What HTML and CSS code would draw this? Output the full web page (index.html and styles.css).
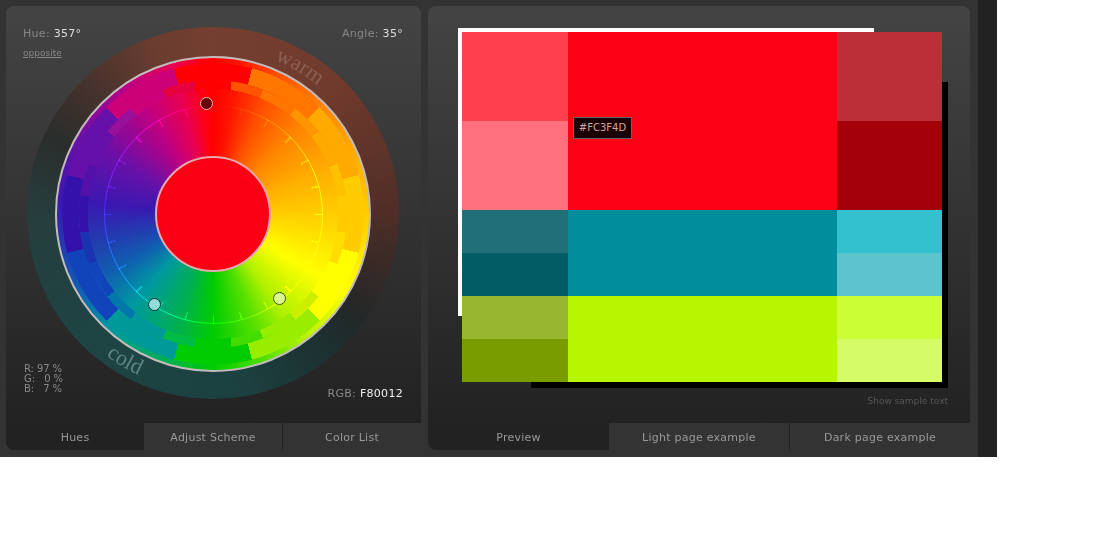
FILE: index.html
```html
<!DOCTYPE html>
<html lang="en">
<head>
  <meta charset="UTF-8">
  <title>Color Scheme</title>
  <link rel="stylesheet" href="styles.css">
</head>
<body>
  <div class="app">
    <div class="frame">

      <section class="panel panel-left">
        <div class="panel-body hues">
          <div class="outer-ring">
            <div class="wheel">
              <div class="tier tier-a"></div>
              <div class="tier tier-b"></div>
              <div class="guide"></div>
              <div class="ticks"></div>
              <div class="center"></div>
            </div>
            <span class="dot dot-red"></span>
            <span class="dot dot-teal"></span>
            <span class="dot dot-lime"></span>
          </div>

          <svg class="ring-words" width="373" height="373" viewBox="0 0 373 373">
            <path id="warm-arc" fill="none" d="M187.9 21.5 A165 165 0 0 1 330.2 105.3"/>
            <path id="cold-arc" fill="none" d="M30.8 272.8 A178 178 0 0 0 183.4 364.5"/>
            <text class="word-warm" text-anchor="middle"><textPath href="#warm-arc" startOffset="50%">warm</textPath></text>
            <text class="word-cold" text-anchor="middle"><textPath href="#cold-arc" startOffset="50%">cold</textPath></text>
          </svg>

          <div class="readouts">
            <div class="readout-row">
              <div>
                <div class="label">Hue: <b>357°</b></div>
                <a class="opposite" href="#">opposite</a>
              </div>
              <div class="label">Angle: <b>35°</b></div>
            </div>
            <div class="readout-row row-bottom">
              <pre class="percent">R: 97 %
G:   0 %
B:   7 %</pre>
              <div class="label">RGB: <b class="hex">F80012</b></div>
            </div>
          </div>
        </div>
        <nav class="tabs">
          <a class="tab active tab-hues">Hues</a>
          <a class="tab tab-adjust">Adjust Scheme</a>
          <a class="tab tab-list">Color List</a>
        </nav>
      </section>

      <section class="panel panel-right">
        <div class="panel-body stage">
          <div class="back back-white"></div>
          <div class="back back-black"></div>
          <div class="swatches">
            <div class="group group-red">
              <div class="side"><i class="c1"></i><i class="c2"></i></div>
              <div class="main"></div>
              <div class="side"><i class="c3"></i><i class="c4"></i></div>
            </div>
            <div class="group group-teal">
              <div class="side"><i class="c1"></i><i class="c2"></i></div>
              <div class="main"></div>
              <div class="side"><i class="c3"></i><i class="c4"></i></div>
            </div>
            <div class="group group-lime">
              <div class="side"><i class="c1"></i><i class="c2"></i></div>
              <div class="main"></div>
              <div class="side"><i class="c3"></i><i class="c4"></i></div>
            </div>
            <div class="tooltip">#FC3F4D</div>
          </div>
          <a class="sample-link" href="#">Show sample text</a>
        </div>
        <nav class="tabs">
          <a class="tab active tab-preview">Preview</a>
          <a class="tab tab-light">Light page example</a>
          <a class="tab tab-dark">Dark page example</a>
        </nav>
      </section>

    </div>
  </div>
</body>
</html>
```

FILE: styles.css
```css
html, body {
  margin: 0;
  background: #fff;
}
body {
  font-family: "DejaVu Sans", sans-serif;
  font-size: 11px;
}
.app {
  width: 997px;
  height: 457px;
  background: #222;
}
.frame {
  width: 978px;
  height: 457px;
  box-sizing: border-box;
  padding: 6px;
  background: #333;
  display: flex;
  gap: 7px;
}
.panel {
  display: flex;
  flex-direction: column;
  height: 444px;
}
.panel-left { width: 415px; }
.panel-right { width: 542px; }
.panel-body {
  height: 417px;
  background: linear-gradient(#444, #222);
  border-radius: 8px 8px 0 0;
  display: grid;
}
.panel-body > * {
  grid-area: 1 / 1;
}

/* tabs */
.tabs {
  display: flex;
  height: 27px;
}
.tab {
  box-sizing: border-box;
  color: #999;
  letter-spacing: 0.25px;
  line-height: 29px;
  text-align: center;
  background: #333;
}
.tab.active {
  background: #222;
  border-radius: 0 0 0 8px;
}
.tab-hues { width: 138px; }
.tab-adjust { width: 139px; border-right: 1px solid #222; }
.tab-list { width: 138px; }
.tab-preview { width: 181px; }
.tab-light { width: 181px; border-right: 1px solid #222; }
.tab-dark { width: 180px; }

/* wheel */
.outer-ring {
  position: relative;
  margin: 21px 0 0 21px;
  justify-self: start;
  align-self: start;
  width: 372px;
  height: 372px;
  border-radius: 50%;
  display: grid;
  place-items: center;
  background: conic-gradient(#743f30 0deg, #703a2c 45deg, #4f2e27 90deg, #3c2a26 105deg, #232828 125deg, #1d3030 140deg, #1c4040 170deg, #1e4444 225deg, #263d3d 270deg, #2a2e2c 295deg, #3e302c 310deg, #6a3c30 340deg, #743f30 360deg);
}
.wheel {
  margin-top: 2px;
  width: 316px;
  height: 316px;
  box-sizing: border-box;
  border: 2px solid #c4bcbc;
  border-radius: 50%;
  display: grid;
  place-items: center;
  background: conic-gradient(#ff0000 0deg, #ff1500 10deg, #ff5000 25deg, #ff8500 45deg, #ffb000 70deg, #ffd500 95deg, #ffff00 120deg, #b0f000 145deg, #55e000 160deg, #00cc00 180deg, #00b050 197deg, #0098a0 222deg, #1060b0 240deg, #2040b0 255deg, #3a18b0 275deg, #6a10a8 300deg, #c00080 328deg, #e80050 345deg, #ff0010 356deg, #ff0000 360deg);
}
.wheel > * {
  grid-area: 1 / 1;
  border-radius: 50%;
}
.tier-a {
  width: 302px;
  height: 302px;
  background: conic-gradient(from -15deg,
    #ff0000 0 30deg, #ff7700 0 60deg, #ffaa00 0 90deg, #ffcc00 0 120deg,
    #ffff00 0 150deg, #99ee00 0 180deg, #00cc00 0 210deg, #009999 0 240deg,
    #1144bb 0 270deg, #3311aa 0 300deg, #6610aa 0 330deg, #cc0077 0 360deg);
  -webkit-mask: radial-gradient(closest-side, transparent 88.7%, #000 88.9%);
  mask: radial-gradient(closest-side, transparent 88.7%, #000 88.9%);
}
.tier-b {
  width: 268px;
  height: 268px;
  background: conic-gradient(from -22deg,
    #e60040 0 14deg, #ff0000 0 30deg,
    #ff5500 0 44deg, #ff7700 0 60deg,
    #ff9500 0 74deg, #ffaa00 0 90deg,
    #ffc000 0 104deg, #ffcc00 0 120deg,
    #ffdd00 0 134deg, #ffff00 0 150deg,
    #ccee00 0 164deg, #99ee00 0 180deg,
    #44dd00 0 194deg, #00cc00 0 210deg,
    #00bb44 0 224deg, #009999 0 240deg,
    #0077aa 0 254deg, #1144bb 0 270deg,
    #1a33b0 0 284deg, #3311aa 0 300deg,
    #5510aa 0 314deg, #6610aa 0 330deg,
    #99109a 0 344deg, #cc0077 0 360deg);
  -webkit-mask: radial-gradient(closest-side, transparent 93.3%, #000 93.6%);
  mask: radial-gradient(closest-side, transparent 93.3%, #000 93.6%);
}
.guide {
  width: 219px;
  height: 219px;
  box-sizing: border-box;
  border: 1px solid #555;
  mix-blend-mode: color-dodge;
}
.ticks {
  width: 219px;
  height: 219px;
  background: repeating-conic-gradient(#3a3a3a 0 0.4deg, transparent 0 14.6deg, #3a3a3a 0 15deg);
  -webkit-mask: radial-gradient(closest-side, transparent 92%, #000 92.5%);
  mask: radial-gradient(closest-side, transparent 92%, #000 92.5%);
  mix-blend-mode: color-dodge;
}
.center {
  width: 116px;
  height: 116px;
  box-sizing: border-box;
  border: 2px solid #e8a8ae;
  background: #fb0013;
}

/* scheme handles on the wheel */
.dot {
  position: absolute;
  width: 13px;
  height: 13px;
  box-sizing: border-box;
  border-radius: 50%;
  border: 1px solid;
}
.dot-red { left: 173px; top: 70px; background: #6b0008; border-color: #e6b8b8; }
.dot-teal { left: 121px; top: 271px; background: #92dcdc; border-color: #0c3236; }
.dot-lime { left: 246px; top: 265px; background: #dcf98c; border-color: #46521c; }

.ring-words {
  position: relative;
  justify-self: center;
  margin-top: 21px;
}
.ring-words text {
  font-family: "Liberation Serif", serif;
  font-size: 22px;
}
.word-warm { fill: #8a5f55; }
.word-cold { fill: #5f8585; }

/* numbers round the wheel */
.readouts {
  position: relative;
  box-sizing: border-box;
  padding: 21px 18px 22px 17px;
  display: flex;
  flex-direction: column;
  justify-content: space-between;
}
.readout-row {
  display: flex;
  justify-content: space-between;
}
.row-bottom { align-items: flex-end; }
.label {
  color: #888;
  letter-spacing: 0.3px;
  line-height: 14px;
}
.label b {
  color: #ddd;
  font-weight: normal;
}
.label b.hex { color: #eee; }
.opposite {
  display: block;
  margin-top: 7px;
  color: #888;
  font-size: 9px;
}
.percent {
  margin: 0 0 7px 1px;
  color: #888;
  font: 10px/10px "DejaVu Sans", sans-serif;
  letter-spacing: -0.1px;
}

/* preview */
.back {
  justify-self: start;
  align-self: start;
}
.back-white {
  margin: 22px 0 0 30px;
  width: 416px;
  height: 288px;
  background: #fff;
}
.back-black {
  margin: 76px 0 0 103px;
  width: 417px;
  height: 306px;
  background: #000;
}
.swatches {
  position: relative;
  justify-self: start;
  align-self: start;
  margin: 26px 0 0 34px;
  width: 480px;
}
.group {
  display: grid;
  grid-template-columns: 106px 269px 105px;
  height: 86px;
}
.group-red { height: 178px; }
.side {
  display: grid;
  grid-template-rows: 1fr 1fr;
}
.group-red .c1 { background: #ff3f4d; }
.group-red .c2 { background: #ff717d; }
.group-red .main { background: #fc0013; }
.group-red .c3 { background: #bc2f39; }
.group-red .c4 { background: #a30009; }
.group-teal .c1 { background: #216f78; }
.group-teal .c2 { background: #015c66; }
.group-teal .main { background: #028d9d; }
.group-teal .c3 { background: #33c1cf; }
.group-teal .c4 { background: #5cc4cf; }
.group-lime .c1 { background: #98b72f; }
.group-lime .c2 { background: #799d00; }
.group-lime .main { background: #b8f500; }
.group-lime .c3 { background: #ccff33; }
.group-lime .c4 { background: #d5fb66; }
.tooltip {
  position: absolute;
  left: 111px;
  top: 85px;
  width: 59px;
  height: 22px;
  box-sizing: border-box;
  border: 1px solid #666;
  background: #1a0002;
  color: #cfa4a8;
  font-size: 10px;
  line-height: 20px;
  text-align: center;
}
.sample-link {
  justify-self: end;
  align-self: end;
  margin: 0 22px 17px 0;
  color: #555;
  font-size: 9px;
  text-decoration: none;
}
```
